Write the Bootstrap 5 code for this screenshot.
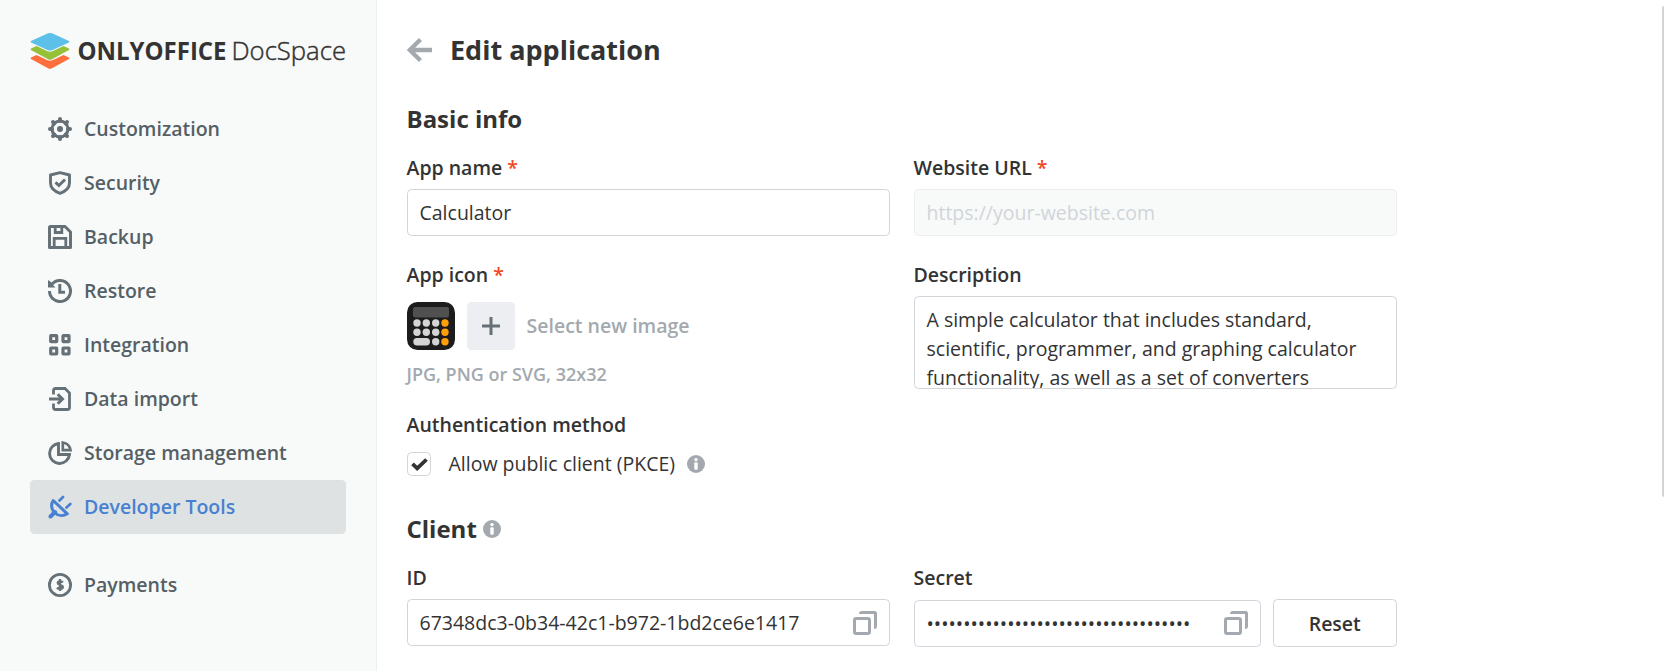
<!DOCTYPE html>
<html lang="en">
<head>
<meta charset="utf-8">
<meta name="viewport" content="width=device-width, initial-scale=1">
<title>Edit application</title>
<link rel="stylesheet" href="https://cdn.jsdelivr.net/npm/bootstrap@5.3.0/dist/css/bootstrap.min.css">
<style>
body{font-family:"Open Sans",sans-serif;font-size:19.5px;line-height:30px;color:#333;background:#fff;height:671px;overflow:hidden}
.side{width:377px;background:#f8faf9;border-right:1px solid #eceeef;padding:30px 30px 0}
.brand{height:42px;margin-bottom:30px}
.side .nav-link{height:54px;padding:0 18px;gap:12px;color:#555f65;font-weight:600;border-radius:4.5px}
.side .nav-link svg{color:#657077;flex:none}
.side .nav-link.active,.side .nav-link.active svg{color:#4781d1}
.side .nav-link.active{background:#dfe2e3}
.pane{padding:0 0 0 30px}
.title{font-size:27px;line-height:40px;font-weight:700;margin:0}
.titlebar{height:40px;margin-top:30px;gap:18px}
.sect{font-size:24px;line-height:32px;font-weight:700;margin:0 0 0 -.5px}
.formgrid{display:grid;grid-template-columns:483px 483px;column-gap:24px}
.fl{display:block;font-weight:600;line-height:26px;margin:0 0 0 -.5px}
.fl b{color:#f24724;font-weight:600}
.box{border:1px solid #d0d5da;border-radius:4.5px;height:47px;padding:0 12px 0 11.5px;font-size:19.5px;color:#333;line-height:29px;background:#fff}
.box:disabled{background:#f8faf9;border-color:#eceeef}
.box::placeholder{color:#d0d5da;opacity:1}
textarea.box{height:93px;padding:8px 12px 0 11.5px;resize:none;overflow:hidden}
.plus{width:48px;height:48px;background:#eceef1;border-radius:4.5px}
.gray{color:#a3a9ae;font-weight:600;margin-left:-.5px}
.check{width:24px;height:24px;border:1px solid #d0d5da;border-radius:4.5px}
.thumb{position:absolute;right:0;top:6px;width:2px;height:491px;background:#d0d5da;border-radius:2px 0 0 2px}
</style>
</head>
<body class="d-flex position-relative">
<svg width="0" height="0" class="position-absolute">
<symbol id="info" viewBox="0 0 18 18"><circle cx="9" cy="9" r="9" fill="#a3a9ae"/><circle cx="9" cy="4.600" r="1.700" fill="#fff"/><rect x="7.300" y="7.200" width="3.400" height="7.600" rx="1" fill="#fff"/></symbol>
<symbol id="copy" viewBox="0 0 24 24"><path d="M6 3Q6 0 9 0H21.500Q24 0 24 2.500V15Q24 18 21 18V3Z" fill="#a3a9ae"/><rect x="1.500" y="7.500" width="15" height="15" rx="1.800" fill="none" stroke="#a3a9ae" stroke-width="3"/></symbol>
</svg>
<aside class="side flex-shrink-0">
<svg class="brand d-block" width="317" height="42" viewBox="0 0 317 42">
<path d="M1 27.500 6.500 25 17 30q3 1.300 6 0l10.500-5L39 27.500q1 .8 0 1.600L22 38.300q-2 1-4 0L1 29.100q-1-.8 0-1.600Z" fill="#ff6f3d"/>
<path d="M1 18.500 6.500 16 17 21q3 1.300 6 0l10.500-5L39 18.500q1 .8 0 1.600L22 29.300q-2 1-4 0L1 20.100q-1-.8 0-1.600Z" fill="#95c038"/>
<path d="M1 11 18 3.300q2-.8 4 0L39 11q1 .7 0 1.500L22 20.300q-2 .9-4 0L1 12.500Q0 11.700 1 11Z" fill="#5dc0e8"/>
<text x="47.500" y="30" font-size="25.500" font-weight="700" fill="#333" textLength="149" lengthAdjust="spacingAndGlyphs">ONLYOFFICE</text>
<text x="201.500" y="30" font-size="25.500" font-weight="300" fill="#333" stroke="#333" stroke-width=".45" textLength="114.500" lengthAdjust="spacingAndGlyphs">DocSpace</text>
</svg>
<nav class="nav flex-column">
<a class="nav-link d-flex align-items-center" href="#"><svg width="24" height="24" viewBox="0 0 24 24"><circle cx="12" cy="12" r="8" fill="none" stroke="currentColor" stroke-width="3"/><circle cx="12" cy="12" r="3" fill="currentColor"/><path d="M12 2v2M12 20v2M2 12h2M20 12h2M5 5l1.300 1.300M17.700 17.700 19 19M5 19l1.300-1.300M17.700 6.300 19 5" stroke="currentColor" stroke-width="4" stroke-linecap="round"/></svg>Customization</a>
<a class="nav-link d-flex align-items-center" href="#"><svg width="24" height="24" viewBox="0 0 24 24" fill="none" stroke="currentColor" stroke-width="3"><path d="M12 1.600 21.500 4v8c0 5-4.500 8.500-9.500 10.400C7 20.500 2.500 17 2.500 12V4Z" stroke-width="2.900" stroke-linejoin="round"/><path d="m7.500 11.300 3.400 3.200L17 8.500"/></svg>Security</a>
<a class="nav-link d-flex align-items-center" href="#"><svg width="24" height="24" viewBox="0 0 24 24" fill="none" stroke="currentColor" stroke-width="3"><path d="M2.500 1.500H17L22.500 7v15.500h-21v-20q0-1 1-1Z" stroke-linejoin="round"/><path d="M7.200 1v6.500h6.600V1" stroke-width="2.800"/><path d="M6.200 22v-8.700h11.600V22" stroke-width="2.800"/></svg>Backup</a>
<a class="nav-link d-flex align-items-center" href="#"><svg width="24" height="24" viewBox="0 0 24 24" fill="none" stroke="currentColor" stroke-width="3"><path d="M1.500 12A10.500 10.500 0 1 0 4 5.200"/><path d="M0 1v7.500h7.500L5 6 3 3Z" fill="currentColor" stroke="none"/><path d="M11.800 5v8.300H17"/></svg>Restore</a>
<a class="nav-link d-flex align-items-center" href="#"><svg width="24" height="24" viewBox="0 0 24 24" fill="none" stroke="currentColor" stroke-width="3.200"><rect x="2.700" y="2.700" width="6" height="6" rx=".4"/><rect x="15" y="2.700" width="6" height="6" rx=".4"/><rect x="2.700" y="15" width="6" height="6" rx=".4"/><rect x="15" y="15" width="6" height="6" rx=".4"/></svg>Integration</a>
<a class="nav-link d-flex align-items-center" href="#"><svg width="24" height="24" viewBox="0 0 24 24" fill="none" stroke="currentColor" stroke-width="3"><path d="M5.500 7.500v-4q0-2 2-2H17L21.500 6v14.500q0 2-2 2h-12q-2 0-2-2v-4" stroke-width="2.800"/><path d="M1 12h13M9.700 7.200l4.800 4.800-4.800 4.800"/></svg>Data import</a>
<a class="nav-link d-flex align-items-center" href="#"><svg width="24" height="24" viewBox="0 0 24 24" fill="none" stroke="currentColor" stroke-width="3"><path d="M10.500 2.500V13.500H21.500A10 10 0 1 1 10.500 2.500Z" stroke-width="2.900"/><path d="M14.800 1.500q6.500.8 7.700 7.700h-7.700Z" stroke-width="2.700"/></svg>Storage management</a>
<a class="nav-link d-flex align-items-center active" href="#"><svg width="24" height="24" viewBox="0 0 24 24" fill="none" stroke="currentColor" stroke-width="3" stroke-linecap="round"><path d="M5.200 5.500C2.500 9.500 3.500 14.500 6.500 17.500s8 4.200 12.800 1.300Z" stroke-linejoin="round"/><path d="m7 17-4.500 4.500" stroke-width="4"/><path d="M11.500 5.500 15 2M18.500 12.500 22.300 9" stroke-width="2.700"/></svg>Developer Tools</a>
<a class="nav-link d-flex align-items-center mt-4" href="#"><svg width="24" height="24" viewBox="0 0 24 24" fill="none" stroke="currentColor"><circle cx="12" cy="12" r="10.600" stroke-width="2.800"/><path d="M14.800 9.500c-1-1.600-5-1.500-5 .5 0 2.200 5 1.700 5 4.100 0 2.200-4.300 2.200-5.800.5M12 6v12" stroke-width="2.400"/></svg>Payments</a>
</nav>
</aside>
<main class="pane flex-grow-1">
<div class="titlebar d-flex align-items-center"><svg width="25" height="26" viewBox="0 0 25 26"><path d="M2.800 13H25M13.500 2.500 2.800 13 13.500 23.500" fill="none" stroke="#a3a9ae" stroke-width="4.300"/></svg><h1 class="title">Edit application</h1></div>
<h2 class="sect" style="margin-top:33px">Basic info</h2>
<div class="formgrid" style="margin-top:20px">
<div><label class="fl">App name <b>*</b></label><input class="box w-100 d-block" style="margin-top:8px" value="Calculator"></div>
<div><label class="fl">Website URL <b>*</b></label><input class="box w-100 d-block" style="margin-top:8px" placeholder="https://your-website.com" disabled></div>
</div>
<div class="formgrid" style="margin-top:26px">
<div><label class="fl">App icon <b>*</b></label>
<div class="d-flex align-items-center" style="gap:12px;margin-top:14px">
<svg width="48" height="48" viewBox="0 0 48 48"><rect width="48" height="48" rx="10.500" fill="#1c1c1c"/><rect x="6" y="5" width="36" height="10.500" rx="2" fill="#505050"/><g fill="#d4d4d4"><circle cx="10" cy="21" r="3.700"/><circle cx="19.300" cy="21" r="3.700"/><circle cx="28.700" cy="21" r="3.700"/><circle cx="10" cy="30.300" r="3.700"/><circle cx="19.300" cy="30.300" r="3.700"/><circle cx="28.700" cy="30.300" r="3.700"/><rect x="6.300" y="36" width="16.700" height="7.400" rx="3.700"/><circle cx="28.700" cy="39.700" r="3.700"/></g><g fill="#ff9f0a"><circle cx="38" cy="21" r="3.700"/><circle cx="38" cy="30.300" r="3.700"/><circle cx="38" cy="39.700" r="3.700"/></g></svg>
<span class="plus d-flex align-items-center justify-content-center"><svg width="18" height="18" viewBox="0 0 18 18"><path d="M9 0v18M0 9h18" stroke="#657077" stroke-width="3"/></svg></span>
<span class="gray">Select new image</span></div>
<div class="gray" style="font-size:18px;margin-top:9px">JPG, PNG or SVG, 32x32</div>
</div>
<div><label class="fl">Description</label><textarea class="box w-100 d-block" style="margin-top:8px">A simple calculator that includes standard, scientific, programmer, and graphing calculator functionality, as well as a set of converters</textarea></div>
</div>
<div class="fl" style="margin-top:23px">Authentication method</div>
<div class="d-flex align-items-center" style="margin-top:11px;height:30px"><span class="check d-flex"><svg width="22" height="22" viewBox="0 0 22 22"><path d="m4.500 10.900 4.700 4.500L18.500 6.500" fill="none" stroke="#333" stroke-width="3.800"/></svg></span><span style="margin-left:17.500px">Allow public client (PKCE)</span><svg width="18" height="18" style="margin-left:11.500px"><use href="#info"/></svg></div>
<div class="d-flex align-items-center" style="margin-top:34px"><h2 class="sect">Client</h2><svg width="18" height="18" style="margin-left:6.500px"><use href="#info"/></svg></div>
<div class="formgrid" style="margin-top:20px">
<div><label class="fl">ID</label><div class="box d-flex align-items-center justify-content-between" style="margin-top:8px"><span>67348dc3-0b34-42c1-b972-1bd2ce6e1417</span><svg width="24" height="24"><use href="#copy"/></svg></div></div>
<div><label class="fl">Secret</label><div class="d-flex" style="gap:12px;margin-top:8px"><div class="box flex-grow-1 d-flex align-items-center justify-content-between" style="margin-top:1px;padding-bottom:1px"><span>••••••••••••••••••••••••••••••••••••</span><svg width="24" height="24"><use href="#copy"/></svg></div><button class="box fw-semibold" style="width:124px;height:48px">Reset</button></div></div>
</div>
</main>
<div class="thumb"></div>
<script src="https://cdn.jsdelivr.net/npm/bootstrap@5.3.0/dist/js/bootstrap.bundle.min.js"></script>
</body>
</html>
